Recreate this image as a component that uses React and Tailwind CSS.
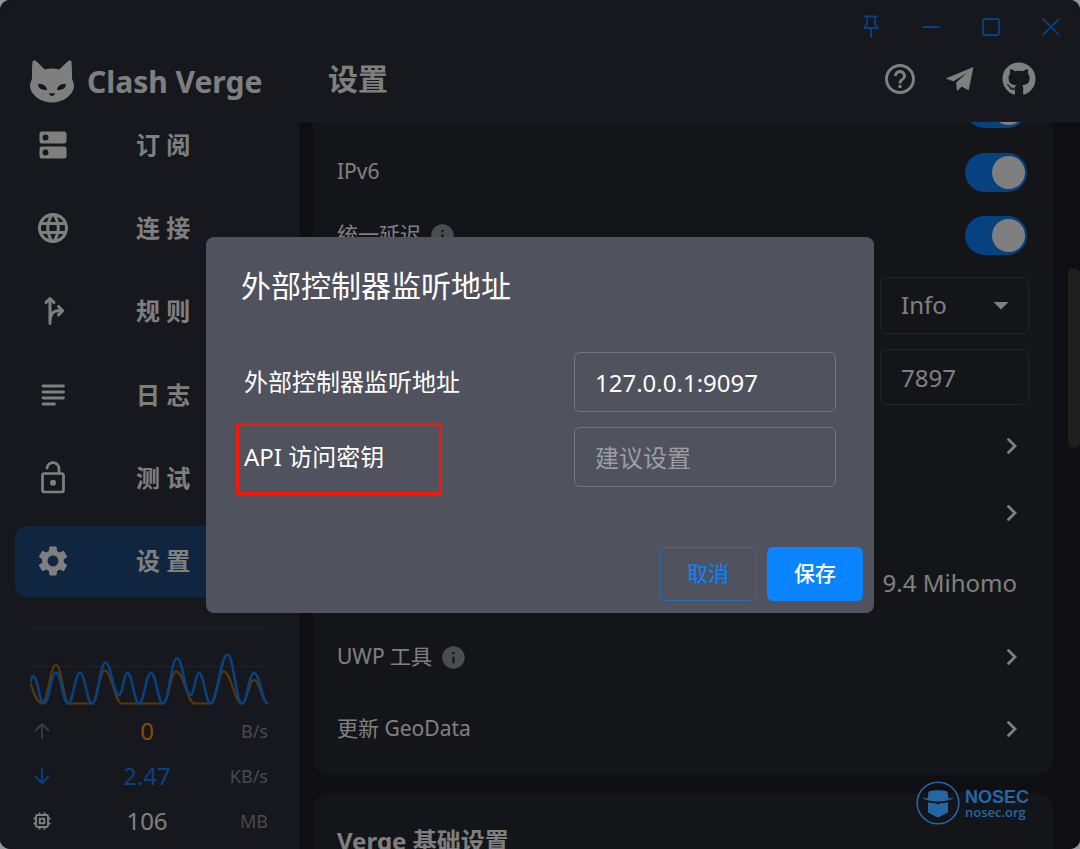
import React from "react";
import { MdLanguage, MdSettings, MdHelpOutline, MdInfo, MdArrowDropDown } from "react-icons/md";
import { FaGithub } from "react-icons/fa";

function CatLogo() {
  return (
    <svg viewBox="0 0 44 43" className="h-[43px] w-[44px] shrink-0" aria-hidden="true">
      <path
        fill="#fff"
        fillRule="evenodd"
        d="M3.800 .5C5 .2 5.800 .8 6.600 1.600L14.800 9.600C19.300 8.200 24.700 8.200 29.200 9.600L38.200 1.100C39.600 0 41.200 .300 41.500 1.600C42 7 42 13 42 18.500C43.200 21.500 44 24.200 44 27C42.400 36 32.500 42.500 22 42.500S1.600 36 0 27C0 24.200 .8 21.500 2 18.500C2 13 2 6 2.500 1.800C2.700 1 3.200 .6 3.800 .5ZM8.200 24.200C7.800 28 11.500 30.400 17 29.900C16.600 25.900 12.800 23.500 8.200 24.200ZM35.800 24.200C31.200 23.500 27.400 25.900 27 29.900C32.500 30.400 36.200 28 35.800 24.200ZM18.800 33.500C19.500 35.200 21 36 22 36S24.500 35.200 25.200 33.500C23 33 21 33 18.800 33.500Z"
      />
    </svg>
  );
}

function DnsIcon() {
  return (
    <svg viewBox="0 0 24 24" className="size-9" fill="currentColor" fillRule="evenodd" aria-hidden="true">
      <path d="M4.500 3h15a1.500 1.500 0 0 1 1.500 1.500v5a1.500 1.500 0 0 1-1.500 1.500h-15A1.500 1.500 0 0 1 3 9.500v-5A1.500 1.500 0 0 1 4.500 3ZM7 5a2 2 0 1 0 0 4a2 2 0 0 0 0-4Z" />
      <path d="M4.500 13h15a1.500 1.500 0 0 1 1.500 1.500v5a1.500 1.500 0 0 1-1.500 1.500h-15A1.500 1.500 0 0 1 3 19.500v-5A1.500 1.500 0 0 1 4.500 13ZM7 15a2 2 0 1 0 0 4a2 2 0 0 0 0-4Z" />
    </svg>
  );
}

function ForkIcon() {
  return (
    <svg viewBox="0 0 36 36" className="size-9" fill="none" stroke="currentColor" strokeWidth="3" strokeLinecap="round" aria-hidden="true">
      <path d="M15 7v23.500M15 29c0-7 3-11.300 8-11.300h3" />
      <path d="M11 9.500l4-4l4 4M23.500 13.500l4.200 4.200l-4.200 4.200" strokeLinejoin="round" />
      <path d="M15 5.500l-3.500 3.500h7ZM27.500 17.700l-3.500-3.500v7Z" fill="currentColor" stroke="none" />
    </svg>
  );
}

function SubjectIcon() {
  return (
    <svg viewBox="0 0 36 36" className="size-9" stroke="currentColor" strokeWidth="2.800" strokeLinecap="round" aria-hidden="true">
      <path d="M8 9h20.500M8 15h20.500M8 21h20.500M8 27h11.500" />
    </svg>
  );
}

function LockIcon() {
  return (
    <svg viewBox="0 0 36 36" className="size-9" fill="none" stroke="currentColor" strokeWidth="2.700" aria-hidden="true">
      <rect x="7.500" y="13.500" width="21" height="18.500" rx="2" />
      <path d="M12 8.200a6 6 0 0 1 12 .8v4.500" strokeLinecap="round" />
      <circle cx="18" cy="22.700" r="3" fill="currentColor" stroke="none" />
    </svg>
  );
}

function PinIcon() {
  return (
    <svg viewBox="0 0 24 24" className="size-6" fill="none" stroke="currentColor" strokeWidth="1.900" strokeLinejoin="round" strokeLinecap="round" aria-hidden="true">
      <path d="M6 1.500h12M8 1.500v7.500l-2.800 4h13.600l-2.800-4V1.500M12 13v9" />
    </svg>
  );
}

function MinimizeIcon() {
  return (
    <svg viewBox="0 0 24 24" className="size-6" stroke="currentColor" strokeWidth="1.900" strokeLinecap="round" aria-hidden="true">
      <path d="M4 12h16" />
    </svg>
  );
}

function MaximizeIcon() {
  return (
    <svg viewBox="0 0 24 24" className="size-6" fill="none" stroke="currentColor" strokeWidth="1.900" aria-hidden="true">
      <rect x="4" y="4" width="16" height="16" rx="1.500" />
    </svg>
  );
}

function CloseIcon() {
  return (
    <svg viewBox="0 0 24 24" className="size-6" stroke="currentColor" strokeWidth="1.900" strokeLinecap="round" aria-hidden="true">
      <path d="M4.300 4.300l15.400 15.400M19.700 4.300L4.300 19.700" />
    </svg>
  );
}

function PlaneIcon() {
  return (
    <svg viewBox="0 0 36 36" className="size-9" fill="currentColor" stroke="currentColor" strokeWidth=".6" strokeLinejoin="round" aria-hidden="true">
      <path d="M4.500 17.500L31 6.500L26.500 29L19.800 25.200L15.200 29.500L14.500 21.500L26.500 10.500L11.500 20Z" />
    </svg>
  );
}

function Chevron() {
  return (
    <svg viewBox="0 0 12 18" className="h-[18px] w-3" fill="none" stroke="currentColor" strokeWidth="2.800" strokeLinecap="round" strokeLinejoin="miter" aria-hidden="true">
      <path d="M2.500 2.500l6.500 6.500l-6.500 6.500" />
    </svg>
  );
}

function ArrowIcon({ down }) {
  return (
    <svg viewBox="0 0 18 18" className="size-[18px]" fill="none" stroke="currentColor" strokeWidth="1.900" strokeLinecap="round" strokeLinejoin="round" aria-hidden="true">
      <path d={down ? "M9 2v14M2.500 9.500l6.500 6.500l6.500-6.500" : "M9 16V2M2.500 8.500l6.500-6.500l6.500 6.500"} />
    </svg>
  );
}

function ChipIcon() {
  return (
    <svg viewBox="0 0 18 18" className="size-[18px]" fill="none" stroke="currentColor" strokeWidth="1.900" aria-hidden="true">
      <rect x="3" y="3" width="12" height="12" rx="1.500" />
      <rect x="6.700" y="6.700" width="4.600" height="4.600" />
      <path d="M6.500 .500v2.500M11.500 .500v2.500M6.500 15v2.500M11.500 15v2.500M.500 6.500h2.500M.500 11.500h2.500M15 6.500h2.500M15 11.500h2.500" />
    </svg>
  );
}

/* Joins the samples with curves whose tangents are level at every sample. */
function smooth(points) {
  return points.reduce((d, [x, y], i) => {
    if (i === 0) return `M${x} ${y}`;
    const [px, py] = points[i - 1];
    const k = (x - px) * 0.42;
    return `${d}C${px + k} ${py} ${x - k} ${y} ${x} ${y}`;
  }, "");
}

const DOWNLOAD = [[0, 53], [3, 48], [14, 75.5], [26, 44.5], [38, 75.5], [50, 45], [62, 75.5], [75.5, 34.5], [89, 67], [97.5, 45], [109, 75.5], [121, 45], [133, 75.5], [147, 30], [160.5, 67], [169, 45], [180.5, 75.5], [197.5, 26.5], [212, 75.5], [224, 45], [238, 75.5]];
const UPLOAD = [[-8, 44], [12, 75.5], [26, 36.5], [39, 75.5], [62, 75.5], [74.5, 42.5], [92, 75.5], [133, 75.5], [146, 43.5], [165, 75.5], [180, 75.5], [193.5, 43.5], [212, 75.5], [224, 52], [238, 75.5]];

function TrafficChart() {
  return (
    <svg viewBox="0 0 238 78" preserveAspectRatio="none" className="block h-[78px] w-full overflow-hidden" fill="none" aria-hidden="true">
      <path d="M0 .5h238M0 38.500h238" stroke="#42444e" />
      <path d={smooth(UPLOAD)} stroke="#b67516" strokeOpacity=".95" strokeWidth="2.200" />
      <path d={smooth(DOWNLOAD)} stroke="#0a84ff" strokeWidth="2.600" />
    </svg>
  );
}

const NAV = [
  { label: "订 阅", icon: <DnsIcon /> },
  { label: "连 接", icon: <MdLanguage className="size-9" /> },
  { label: "规 则", icon: <ForkIcon /> },
  { label: "日 志", icon: <SubjectIcon /> },
  { label: "测 试", icon: <LockIcon /> },
  { label: "设 置", icon: <MdSettings className="size-9" />, active: true },
];

function Sidebar() {
  return (
    <aside className="flex w-[299px] shrink-0 flex-col border-r border-[#383a44] bg-[#2e303a]">
      <div className="flex items-center gap-[13px] pt-[60px] pl-[30px]">
        <CatLogo />
        <span className="font-['Noto_Sans','Open_Sans',sans-serif] text-[30px] leading-[43px] font-bold whitespace-nowrap text-white">Clash Verge</span>
      </div>
      <nav className="mt-[6px] flex h-[488px] flex-col justify-between pr-[14px] pl-[15px]">
        {NAV.map((n) => (
          <a
            key={n.label}
            href="#"
            aria-current={n.active ? "page" : undefined}
            className={`flex h-[71px] items-center rounded-xl pl-5 text-2xl font-bold text-white ${n.active ? "bg-[#204a7e]" : ""}`}
          >
            {n.icon}
            <span className="ml-[65px]">{n.label}</span>
          </a>
        ))}
      </nav>
      <div className="mt-[31px] pr-[30px] pl-[30px]">
        <TrafficChart />
        <div className="pt-0.5">
          <TrafficRow icon={<ArrowIcon />} iconClass="text-[#77797f]" value="0" valueClass="text-[#ff9f0a]" unit="B/s" />
          <TrafficRow icon={<ArrowIcon down />} iconClass="text-[#0a84ff]" value="2.47" valueClass="text-[#0a84ff]" unit="KB/s" />
          <TrafficRow icon={<ChipIcon />} iconClass="text-white" value="106" valueClass="text-white" unit="MB" />
        </div>
      </div>
    </aside>
  );
}

function TrafficRow({ icon, iconClass, value, valueClass, unit }) {
  return (
    <div className="grid h-[45px] grid-cols-[24px_1fr_28px] items-center">
      <span className={`pl-[3px] ${iconClass}`}>{icon}</span>
      <span className={`text-center text-2xl ${valueClass}`}>{value}</span>
      <span className="flex justify-end text-lg text-[#929398]">{unit}</span>
    </div>
  );
}

function Header() {
  return (
    <header className="flex h-[122px] shrink-0 flex-col border-b border-[#383a44] bg-[#2e303a]">
      <div className="flex h-[54px] items-center justify-end gap-9 pr-[17px] text-[#0a84ff]">
        <button type="button" aria-label="置顶"><PinIcon /></button>
        <button type="button" aria-label="最小化"><MinimizeIcon /></button>
        <button type="button" aria-label="最大化"><MaximizeIcon /></button>
        <button type="button" aria-label="关闭"><CloseIcon /></button>
      </div>
      <div className="flex h-[49px] items-center justify-between pr-[44px] pl-[29px] text-white">
        <h1 className="text-[30px] leading-10 font-bold">设置</h1>
        <div className="flex items-center gap-6">
          <button type="button" aria-label="帮助"><MdHelpOutline className="size-9" /></button>
          <button type="button" aria-label="Telegram"><PlaneIcon /></button>
          <button type="button" aria-label="GitHub"><FaGithub className="size-[34px]" /></button>
        </div>
      </div>
    </header>
  );
}

function Row({ label, info, height, children }) {
  return (
    <div className={`flex items-center justify-between ${height}`}>
      <span className="flex items-center gap-2 text-[21px] text-white">
        {label}
        {info && <MdInfo className="size-[27px] text-[#97989d]" />}
      </span>
      {children}
    </div>
  );
}

function Toggle({ label }) {
  return (
    <input
      type="checkbox"
      role="switch"
      defaultChecked
      aria-label={label}
      className="mr-0.5 flex h-[39px] w-[62px] shrink-0 appearance-none items-center justify-end rounded-full bg-[#0a84ff] pr-0.5 before:size-[33px] before:rounded-full before:bg-white"
    />
  );
}

function More({ label }) {
  return (
    <button type="button" aria-label={label} className="mr-[11px] text-white">
      <Chevron />
    </button>
  );
}

function Settings() {
  return (
    <main className="relative min-h-0 flex-1 overflow-hidden bg-[#1e1e26]">
      <div className="-mt-[46px] pr-[27px] pl-[14px]">
        <section className="rounded-b-2xl bg-[#282a33] px-6 pb-[9px]">
          <Row height="h-16"><Toggle label="局域网连接" /></Row>
          <Row height="h-16" label="IPv6"><Toggle label="IPv6" /></Row>
          <Row height="h-[62px]" label="统一延迟" info><Toggle label="统一延迟" /></Row>
          <Row height="h-[78px]">
            <div className="relative flex w-[149px] items-center">
              <select aria-label="日志等级" className="h-[57px] w-full appearance-none rounded-md border border-[#44464f] bg-transparent pl-5 text-2xl text-white">
                <option>Info</option>
              </select>
              <MdArrowDropDown className="pointer-events-none absolute right-[10px] size-9 text-white" />
            </div>
          </Row>
          <Row height="h-[66px]">
            <input aria-label="端口设置" defaultValue="7897" className="h-14 w-[149px] rounded-md border border-[#44464f] bg-transparent pl-5 text-2xl text-white" />
          </Row>
          <Row height="h-[72px]"><More label="外部控制" /></Row>
          <Row height="h-[62px]"><More label="网页界面" /></Row>
          <Row height="h-[78px]"><span className="mr-3 text-2xl text-white">9.4 Mihomo</span></Row>
          <Row height="h-[70px]" label="UWP 工具" info><More label="UWP 工具" /></Row>
          <Row height="h-[74px]" label="更新 GeoData"><More label="更新 GeoData" /></Row>
        </section>
        <section className="mt-[18px] h-40 rounded-2xl bg-[#282a33] px-6 pt-[30px]">
          <h2 className="text-2xl leading-9 font-bold text-white">Verge 基础设置</h2>
        </section>
      </div>
      <div className="absolute top-[146px] right-0 h-[180px] w-3 rounded-full bg-[#3e3e40]" />
    </main>
  );
}

function Dialog() {
  return (
    <form role="dialog" aria-labelledby="dialog-title" className="w-[668px] rounded-lg bg-[#50525d] pt-[26px] pb-3 text-white">
      <h2 id="dialog-title" className="px-[35px] text-[30px] leading-[46px]">外部控制器监听地址</h2>
      <div className="mt-[43px] flex flex-col gap-[15px] px-[38px]">
        <div className="flex items-center justify-between">
          <label htmlFor="controller" className="text-2xl">外部控制器监听地址</label>
          <input id="controller" defaultValue="127.0.0.1:9097" className="h-[60px] w-[262px] rounded-md border border-[#73757e] bg-transparent px-5 text-2xl" />
        </div>
        <div className="relative flex items-center justify-between">
          <label htmlFor="secret" className="text-2xl">API 访问密钥</label>
          <input id="secret" placeholder="建议设置" className="h-[60px] w-[262px] rounded-md border border-[#73757e] bg-transparent px-5 text-2xl placeholder:text-[#9c9da3]" />
          <div className="pointer-events-none absolute -top-1 -left-2 h-[72px] w-[206px] rounded-xs border-[3px] border-[#fb1705]" />
        </div>
      </div>
      <div className="mt-[60px] flex justify-end gap-[11px] pr-[11px]">
        <button type="button" className="h-[54px] w-24 rounded-md border border-[#2c6bb0] text-[21px] text-[#0a84ff]">取消</button>
        <button type="submit" className="h-[54px] w-24 rounded-md bg-[#0a84ff] text-[21px] font-medium text-white">保存</button>
      </div>
    </form>
  );
}

function Watermark() {
  return (
    <div className="pointer-events-none absolute right-[52px] bottom-6 flex items-center gap-[5px] text-[#2567a6]">
      <svg viewBox="0 0 44 44" className="size-11" aria-hidden="true">
        <circle cx="22" cy="22" r="20.800" fill="none" stroke="currentColor" strokeWidth="1.600" />
        <path fill="currentColor" d="M12.500 10.500C18 8.800 26 8.800 31.500 10.500L32.300 17.500C34.500 17.200 36.500 16.700 37.500 16.200C36.500 18.800 29 20.500 22 20.500S7.500 18.800 6.500 16.200C7.500 16.700 9.500 17.200 11.700 17.500Z" />
        <path fill="currentColor" d="M12 21.200C15 22 19 22.300 20.500 22.300Q20.700 23.600 22 23.600Q23.300 23.600 23.500 22.300C25 22.300 29 22 32 21.200V31.500L22 36.500L12 31.500Z" />
      </svg>
      <div className="flex w-[63px] flex-col">
        <span className="font-['Liberation_Sans',sans-serif] text-lg leading-[18px] font-bold">NOSEC</span>
        <span className="font-['Open_Sans',sans-serif] text-[13px] leading-3 font-semibold">nosec.org</span>
      </div>
    </div>
  );
}

export default function App() {
  return (
    <div className="h-screen bg-[#8f9a9b] font-['Noto_Sans','Noto_Sans_CJK_SC',sans-serif]">
      <div className="relative flex h-full overflow-hidden rounded-[10px] bg-[#1e1e26]">
        <Sidebar />
        <div className="flex min-w-0 flex-1 flex-col">
          <Header />
          <Settings />
        </div>
        <div className="absolute inset-0 flex items-center justify-center bg-black/50 pt-px">
          <Dialog />
        </div>
        <Watermark />
      </div>
    </div>
  );
}
